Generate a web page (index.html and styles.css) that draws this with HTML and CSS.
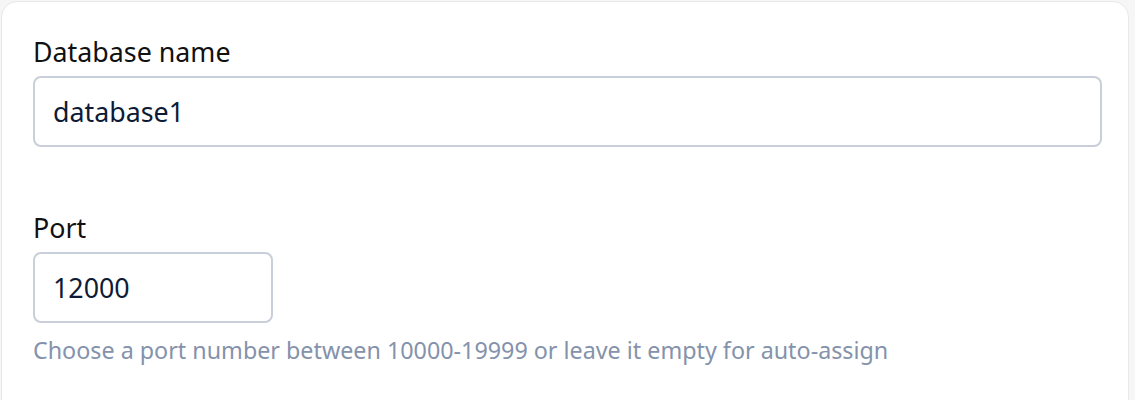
FILE: index.html
```html
<!DOCTYPE html>
<html>
<head>
<meta charset="utf-8">
<link rel="stylesheet" href="styles.css">
</head>
<body>
<div class="card">
  <div class="field">
    <label class="label">Database name</label>
    <div class="input wide">database1</div>
  </div>
  <div class="field port">
    <label class="label">Port</label>
    <div class="input narrow">12000</div>
    <p class="help">Choose a port number between 10000-19999 or leave it empty for auto-assign</p>
  </div>
</div>
</body>
</html>
```
FILE: styles.css
```css
html, body {
  margin: 0;
  padding: 0;
  background: #f6f6f6;
  height: 400px;
  overflow: hidden;
}
body {
  font-family: "Noto Sans", sans-serif;
}
.card {
  box-sizing: border-box;
  width: 1128px;
  height: 440px;
  margin: 1px 0 0 1px;
  background: #ffffff;
  border: 1px solid #e8e8e8;
  border-radius: 16px;
  padding: 32px 26px 0 31px;
}
.field {
  display: flex;
  flex-direction: column;
}
.port {
  margin-top: 63px;
}
.label {
  font-size: 26.8px;
  line-height: 36px;
  color: #111111;
  margin-bottom: 6px;
}
.input {
  box-sizing: border-box;
  height: 71px;
  border: 2px solid #c8cfdb;
  border-radius: 8px;
  padding: 0 18px;
  display: flex;
  align-items: center;
  font-size: 26.8px;
  color: #0e1b36;
}
.wide { width: 1069px; }
.narrow { width: 240px; }
.help {
  margin: 12px 0 0 0;
  font-size: 23.3px;
  line-height: 30px;
  color: #8492ab;
}
```
